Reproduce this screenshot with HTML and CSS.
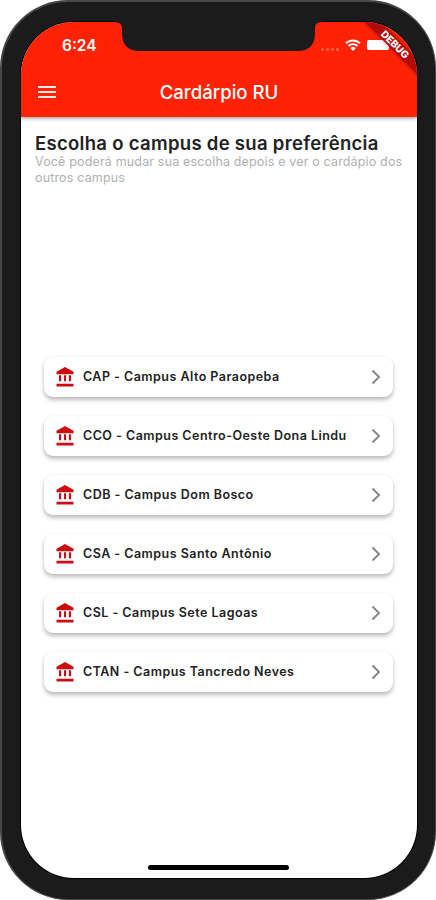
FILE: index.html
```html
<!DOCTYPE html>
<html lang="pt-BR">
<head>
    <meta charset="UTF-8">
    <meta name="viewport" content="width=device-width, initial-scale=1.0">
    <title>Cardárpio RU</title>
    <link rel="stylesheet" href="styles.css">
</head>
<body>
    <svg class="sprite" aria-hidden="true">
        <symbol id="icon-bank" viewBox="0 0 18 20">
            <path d="M9 0 .5 4.800v2.400h17V4.800zM3 8.300v6h2.200v-6zm5 0v6h2.100v-6zm4.900 0v6h2.200v-6zM.5 16.800v2.700h17v-2.700z"/>
        </symbol>
        <symbol id="icon-chevron" viewBox="0 0 10 16">
            <path d="M1.500 1.500 8 8l-6.500 6.500" fill="none" stroke="currentColor" stroke-width="1.900"/>
        </symbol>
    </svg>

    <div class="phone">
        <div class="screen">
            <header>
                <div class="status-bar">
                    <span class="clock">6:24</span>
                    <div class="status-icons">
                        <span class="signal"><i></i><i></i><i></i><i></i></span>
                        <svg class="wifi" viewBox="0 0 16 12">
                            <path d="M1 4.300a10 10 0 0 1 14 0M3.500 7a6.400 6.400 0 0 1 9 0" fill="none" stroke="#fff" stroke-width="1.900"/>
                            <path d="M8 12 5.300 9.200a3.800 3.800 0 0 1 5.400 0z" fill="#fff"/>
                        </svg>
                        <span class="battery"></span>
                    </div>
                </div>
                <div class="app-bar">
                    <span class="menu"><i></i><i></i><i></i></span>
                    <h1>Cardárpio RU</h1>
                </div>
            </header>

            <main>
                <section class="intro">
                    <h2>Escolha o campus de sua preferência</h2>
                    <p>Você poderá mudar sua escolha depois e ver o cardápio dos<br>outros campus</p>
                </section>

                <ul class="campus-list">
                    <li><svg class="bank"><use href="#icon-bank"/></svg><span>CAP - Campus Alto Paraopeba</span><svg class="chevron"><use href="#icon-chevron"/></svg></li>
                    <li><svg class="bank"><use href="#icon-bank"/></svg><span>CCO - Campus Centro-Oeste Dona Lindu</span><svg class="chevron"><use href="#icon-chevron"/></svg></li>
                    <li><svg class="bank"><use href="#icon-bank"/></svg><span>CDB - Campus Dom Bosco</span><svg class="chevron"><use href="#icon-chevron"/></svg></li>
                    <li><svg class="bank"><use href="#icon-bank"/></svg><span>CSA - Campus Santo Antônio</span><svg class="chevron"><use href="#icon-chevron"/></svg></li>
                    <li><svg class="bank"><use href="#icon-bank"/></svg><span>CSL - Campus Sete Lagoas</span><svg class="chevron"><use href="#icon-chevron"/></svg></li>
                    <li><svg class="bank"><use href="#icon-bank"/></svg><span>CTAN - Campus Tancredo Neves</span><svg class="chevron"><use href="#icon-chevron"/></svg></li>
                </ul>
            </main>

            <div class="home-indicator"></div>
            <div class="debug">DEBUG</div>
        </div>
        <svg class="notch" viewBox="0 0 208 30">
            <path d="M0 0h208v1q-7 0-7 6v5q0 18-18 18H26Q8 30 8 12V7Q8 1 0 1z"/>
        </svg>
    </div>
</body>
</html>
```
FILE: styles.css
```css
* {
    box-sizing: border-box;
}
body {
    margin: 0;
    background: #fff;
    font-family: Inter, Roboto, sans-serif;
    color: #222;
}
.sprite {
    display: none;
}

/* Moldura */
.phone {
    position: relative;
    width: 436px;
    height: 900px;
    padding: 20px 17px 20px 19px;
    background: #1b1b1b;
    border: 1px solid #484848;
    border-width: 2px 1px 1px 2px;
    border-radius: 68px;
}
.screen {
    position: relative;
    display: flex;
    flex-direction: column;
    width: 396px;
    height: 856px;
    background: #fff;
    border-radius: 53px;
    box-shadow: 0 0 0 1px #000;
    overflow: hidden;
}
.notch {
    position: absolute;
    top: 19px;
    left: 112px;
    width: 208px;
    height: 30px;
    fill: #1b1b1b;
}

/* Topo */
header {
    height: 95px;
    background: #ff2205;
    color: #fff;
    box-shadow: 0 1px 4px rgba(0, 0, 0, 0.45);
}
.status-bar {
    display: flex;
    justify-content: space-between;
    align-items: center;
    height: 46px;
    padding: 0 28px 0 41px;
}
.clock {
    font-size: 15.500px;
    font-weight: 600;
}
.status-icons {
    display: flex;
    align-items: center;
}
.signal {
    display: flex;
    gap: 2px;
    margin: 9px 6px 0 0;
}
.signal i {
    width: 3px;
    height: 3px;
    border-radius: 1px;
    background: rgba(255, 255, 255, 0.25);
}
.wifi {
    width: 16px;
    height: 12px;
    margin-right: 6px;
}
.battery {
    width: 22px;
    height: 10px;
    border-radius: 2px;
    background: #fff;
}
.app-bar {
    display: grid;
    grid-template-columns: 36px 1fr 36px;
    align-items: center;
    height: 48px;
}
.menu {
    display: grid;
    gap: 3px;
    width: 18px;
    margin-left: 17px;
}
.menu i {
    height: 2px;
    background: rgba(255, 255, 255, 0.9);
}
h1 {
    margin: 0;
    font-size: 18.600px;
    font-weight: 500;
    text-align: center;
    white-space: nowrap;
}

/* Texto inicial */
main {
    flex: 1;
}
.intro {
    height: 240px;
    padding: 15px 0 0 14px;
    white-space: nowrap;
}
h2 {
    margin: 0;
    font-size: 18.500px;
    line-height: 22px;
    font-weight: 600;
    letter-spacing: 0.300px;
}
.intro p {
    margin: 0;
    font-size: 12.500px;
    line-height: 16px;
    letter-spacing: 0.160px;
    color: #b0b0b0;
}

/* Lista de campus */
.campus-list {
    display: grid;
    gap: 19px;
    margin: 0;
    padding: 0 24px 0 23px;
    list-style: none;
}
.campus-list li {
    display: flex;
    align-items: center;
    height: 40px;
    padding: 0 12px;
    border-radius: 9px;
    background: #fff;
    box-shadow: 0 3px 4px rgba(0, 0, 0, 0.26), 0 0 2px rgba(0, 0, 0, 0.06);
    font-size: 12.500px;
    font-weight: 600;
    letter-spacing: 0.470px;
    white-space: nowrap;
}
.campus-list span {
    padding-bottom: 1px;
}
.bank {
    width: 18px;
    height: 20px;
    margin-right: 9px;
    fill: #cc0c10;
}
.chevron {
    width: 10px;
    height: 16px;
    margin-left: auto;
    color: #868686;
}

.home-indicator {
    width: 141px;
    height: 5px;
    margin: 0 auto 8px 127px;
    border-radius: 3px;
    background: #000;
}

/* Faixa de debug no canto */
.debug {
    position: absolute;
    top: 17px;
    right: -28px;
    width: 100px;
    height: 11px;
    background: #b30a0a;
    box-shadow: 0 0 4px rgba(90, 0, 0, 0.5);
    color: #fff;
    font-size: 10px;
    line-height: 11px;
    font-weight: 800;
    text-align: center;
    transform: rotate(45deg);
}
```
